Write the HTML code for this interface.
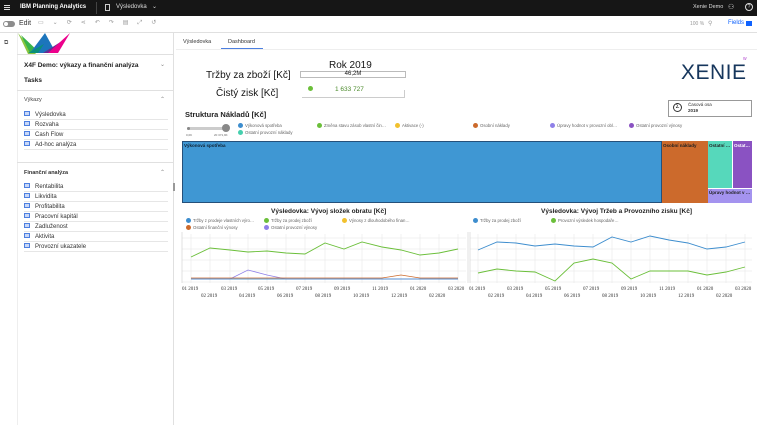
<!DOCTYPE html>
<html><head><meta charset="utf-8"><style>
*{margin:0;padding:0;box-sizing:border-box}
body{width:757px;height:425px;position:relative;overflow:hidden;background:#fff;font-family:"Liberation Sans",sans-serif;color:#161616}
.a{position:absolute;white-space:nowrap}
.lg{font-size:4.3px;color:#666}
.dot{display:inline-block;width:5px;height:5px;border-radius:50%;vertical-align:middle;margin-right:2px}
.it{font-size:6px;color:#333;position:absolute;left:24px;width:144px;height:10px;border-bottom:1px solid #e6e6e6;line-height:10px}
.it i{display:inline-block;width:6px;height:5px;border:1px solid #4c7fe0;background:#c9d8f8;vertical-align:middle;margin-right:5px;margin-top:-1px}
.ax{font-size:5px;color:#333;font-family:"Liberation Serif",serif}
</style></head><body>
<div class="a" style="left:0;top:0;width:757px;height:16px;background:#161616"></div>
<div class="a" style="left:4px;top:5px;width:6px;height:1px;background:#ddd;box-shadow:0 2px 0 #ddd,0 4px 0 #ddd"></div>
<div class="a" style="left:20px;top:4px;font-size:6px;color:#fff;font-weight:bold">IBM Planning Analytics</div>
<div class="a" style="left:96px;top:2px;width:1px;height:12px;background:#444"></div>
<div class="a" style="left:105px;top:4px;width:5px;height:7px;border:1px solid #ccc"></div>
<div class="a" style="left:116px;top:4px;font-size:6px;color:#ddd">Výsledovka</div>
<div class="a" style="left:152px;top:3px;font-size:6px;color:#ddd">⌄</div>
<div class="a" style="left:693px;top:4px;font-size:5.5px;color:#ddd">Xenie Demo</div>
<div class="a" style="left:728px;top:3px;font-size:7px;color:#ddd">⚇</div>
<div class="a" style="left:745px;top:3px;width:8px;height:8px;border:1px solid #ddd;border-radius:50%;font-size:5px;color:#ddd;text-align:center;line-height:6px">?</div>
<div class="a" style="left:0;top:16px;width:757px;height:17px;border-bottom:1px solid #e0e0e0"></div>
<div class="a" style="left:3px;top:21px;width:12px;height:6px;border-radius:3px;background:#8d8d8d"></div>
<div class="a" style="left:4px;top:22px;width:4px;height:4px;border-radius:50%;background:#fff"></div>
<div class="a" style="left:19px;top:20px;font-size:7px;color:#333">Edit</div>
<div class="a" style="left:38px;top:19px;font-size:6px;color:#999;letter-spacing:9px">▭⌄⟳⋖↶↷▤⤢↺</div>
<div class="a" style="left:690px;top:21px;font-size:5px;color:#999">100 %</div>
<div class="a" style="left:708px;top:20px;font-size:6px;color:#999">⚲</div>
<div class="a" style="left:728px;top:20px;font-size:6px;color:#0f62fe">Fields</div>
<div class="a" style="left:746px;top:21px;width:6px;height:5px;background:#0f62fe"></div>
<div class="a" style="left:4px;top:40px;font-size:6px;color:#555">⧉</div>
<div class="a" style="left:17px;top:33px;width:157px;height:392px;border-right:1px solid #e0e0e0;border-left:1px solid #eee"></div>
<svg class="a" style="left:18px;top:33px" width="54" height="21"><polygon points="0,0 18,21 10,21" fill="#8cc63f"/><polygon points="3,2 22,20 12,20" fill="#38b44a"/><polygon points="12,20 27,0 38,20" fill="#1c75bc"/><polygon points="25,20 44,8 35,20" fill="#662d91"/><polygon points="30,20 52,0 40,20" fill="#ec008c"/><polygon points="10,20 26,11 20,20" fill="#0a8f7a"/></svg>
<div class="a" style="left:17px;top:54px;width:156px;height:1px;background:#e0e0e0"></div>
<div class="a" style="left:24px;top:62px;font-size:6.5px;font-weight:bold;color:#222">X4F Demo: výkazy a finanční analýza</div>
<div class="a" style="left:160px;top:61px;font-size:6px;color:#888">⌄</div>
<div class="a" style="left:24px;top:77px;font-size:6.5px;font-weight:bold;color:#222">Tasks</div>
<div class="a" style="left:17px;top:90px;width:156px;height:1px;background:#e0e0e0"></div>
<div class="a" style="left:24px;top:97px;font-size:5.5px;color:#444">Výkazy</div>
<div class="a" style="left:160px;top:96px;font-size:6px;color:#888">⌃</div>
<div class="it" style="top:110px"><i></i>Výsledovka</div>
<div class="it" style="top:120px"><i></i>Rozvaha</div>
<div class="it" style="top:130px"><i></i>Cash Flow</div>
<div class="it" style="top:140px"><i></i>Ad-hoc analýza</div>
<div class="a" style="left:17px;top:162px;width:156px;height:1px;background:#e0e0e0"></div>
<div class="a" style="left:24px;top:170px;font-size:5.5px;font-weight:bold;color:#333">Finanční analýza</div>
<div class="a" style="left:160px;top:169px;font-size:6px;color:#888">⌃</div>
<div class="it" style="top:182px"><i></i>Rentabilita</div>
<div class="it" style="top:192px"><i></i>Likvidita</div>
<div class="it" style="top:202px"><i></i>Profitabilita</div>
<div class="it" style="top:212px"><i></i>Pracovní kapitál</div>
<div class="it" style="top:222px"><i></i>Zadluženost</div>
<div class="it" style="top:232px"><i></i>Aktivita</div>
<div class="it" style="top:242px"><i></i>Provozní ukazatele</div>
<div class="a" style="left:173px;top:183px;width:2px;height:8px;background:#999"></div>
<div class="a" style="left:183px;top:39px;font-size:5.5px;color:#333">Výsledovka</div>
<div class="a" style="left:228px;top:39px;font-size:5.5px;color:#333">Dashboard</div>
<div class="a" style="left:221px;top:48px;width:42px;height:1px;background:#4c7fe0"></div>
<div class="a" style="left:176px;top:49px;width:581px;height:1px;background:#eee"></div>
<div class="a" style="left:329px;top:60px;font-size:10px">Rok 2019</div>
<div class="a" style="left:206px;top:70px;font-size:10px">Tržby za zboží [Kč]</div>
<div class="a" style="left:300px;top:71px;width:106px;height:7px;border:1px solid #bbb;font-size:6px;text-align:center;line-height:5px">46,2M</div>
<div class="a" style="left:216px;top:88px;font-size:10px">Čistý zisk [Kč]</div>
<div class="a" style="left:302px;top:90px;width:103px;height:8px;border-bottom:1px solid #ccc;border-right:1px solid #ccc"></div>
<div class="a" style="left:308px;top:86px;width:5px;height:5px;border-radius:50%;background:#6bbf3a"></div>
<div class="a" style="left:335px;top:86px;font-size:6.5px;color:#4a8a2a">1 633 727</div>
<div class="a" style="left:681px;top:61px;font-size:21px;color:#16365c;letter-spacing:0.5px">XENIE</div>
<div class="a" style="left:743px;top:56px;font-size:5px;color:#b44fd0">ᴡ</div>
<div class="a" style="left:668px;top:100px;width:84px;height:17px;border:1px solid #999"></div>
<div class="a" style="left:673px;top:103px;width:9px;height:9px;border:1px solid #333;border-radius:50%;font-size:6px;text-align:center;line-height:7px">Σ</div>
<div class="a" style="left:688px;top:102px;font-size:4.5px;color:#333">Časová osa</div>
<div class="a" style="left:688px;top:108px;font-size:4.5px;color:#333;font-weight:bold">2019</div>
<div class="a" style="left:185px;top:110px;font-size:7.5px;font-weight:bold;color:#222">Struktura Nákladů [Kč]</div>
<div class="a" style="left:187px;top:127px;width:40px;height:3px;background:#ccc;border-radius:2px"></div>
<div class="a" style="left:187px;top:127px;width:3px;height:3px;border-radius:50%;background:#888"></div>
<div class="a" style="left:222px;top:124px;width:8px;height:8px;border-radius:50%;background:#888"></div>
<div class="a" style="left:186px;top:133px;font-size:3px;color:#666">0,0K</div>
<div class="a" style="left:214px;top:133px;font-size:3px;color:#666">20 371,9K</div>
<div class="a lg" style="left:238px;top:123px"><span class="dot" style="background:#3d8dce"></span>Výkonová spotřeba</div>
<div class="a lg" style="left:238px;top:130px"><span class="dot" style="background:#45cfae"></span>Ostatní provozní náklady</div>
<div class="a lg" style="left:317px;top:123px"><span class="dot" style="background:#6bbf3a"></span>Změna stavu zásob vlastní čin…</div>
<div class="a lg" style="left:395px;top:123px"><span class="dot" style="background:#f2c12e"></span>Aktivace (-)</div>
<div class="a lg" style="left:473px;top:123px"><span class="dot" style="background:#cc6a2c"></span>Osobní náklady</div>
<div class="a lg" style="left:550px;top:123px"><span class="dot" style="background:#8f80e8"></span>Úpravy hodnot v provozní obl…</div>
<div class="a lg" style="left:629px;top:123px"><span class="dot" style="background:#8a52c2"></span>Ostatní provozní výnosy</div>
<div class="a" style="left:182px;top:141px;width:480px;height:62px;background:#3f97d3;border:1px solid #25507a"></div>
<div class="a" style="left:184px;top:143px;font-size:4.5px;font-weight:bold;color:#123">Výkonová spotřeba</div>
<div class="a" style="left:662px;top:141px;width:46px;height:62px;background:#cc6a2c"></div>
<div class="a" style="left:663px;top:143px;font-size:4.5px;font-weight:bold;color:#222">Osobní náklady</div>
<div class="a" style="left:708px;top:141px;width:25px;height:47px;background:#56d8bb;border-right:1px solid #fff"></div>
<div class="a" style="left:709px;top:143px;font-size:4.5px;font-weight:bold;color:#222">Ostatní …</div>
<div class="a" style="left:733px;top:141px;width:19px;height:47px;background:#8a52c2"></div>
<div class="a" style="left:734px;top:143px;font-size:4.5px;font-weight:bold;color:#fff">Ostat…</div>
<div class="a" style="left:708px;top:188px;width:44px;height:15px;background:#a493ef;border-top:1px solid #fff"></div>
<div class="a" style="left:709px;top:190px;font-size:4.5px;font-weight:bold;color:#222">Úpravy hodnot v …</div>
<div class="a" style="left:271px;top:208px;font-size:6.5px;font-weight:bold;color:#222">Výsledovka: Vývoj složek obratu [Kč]</div>
<div class="a" style="left:541px;top:208px;font-size:6.5px;font-weight:bold;color:#222">Výsledovka: Vývoj Tržeb a Provozního zisku [Kč]</div>
<div class="a lg" style="left:186px;top:218px"><span class="dot" style="background:#3d8dce"></span>Tržby z prodeje vlastních výro…</div>
<div class="a lg" style="left:264px;top:218px"><span class="dot" style="background:#6bbf3a"></span>Tržby za prodej zboží</div>
<div class="a lg" style="left:342px;top:218px"><span class="dot" style="background:#f2c12e"></span>Výnosy z dlouhodobého finan…</div>
<div class="a lg" style="left:186px;top:225px"><span class="dot" style="background:#cc6a2c"></span>Ostatní finanční výnosy</div>
<div class="a lg" style="left:264px;top:225px"><span class="dot" style="background:#8f80e8"></span>Ostatní provozní výnosy</div>
<div class="a lg" style="left:473px;top:218px"><span class="dot" style="background:#3d8dce"></span>Tržby za prodej zboží</div>
<div class="a lg" style="left:551px;top:218px"><span class="dot" style="background:#6bbf3a"></span>Provozní výsledek hospodaře…</div>
<svg class="a" style="left:0;top:0" width="757" height="425">
<g stroke="#e6e6e6" stroke-width="0.6" fill="none">
<line x1="182" y1="238" x2="466" y2="238"/><line x1="182" y1="249" x2="466" y2="249"/><line x1="182" y1="260" x2="466" y2="260"/><line x1="182" y1="271" x2="466" y2="271"/><line x1="182" y1="282" x2="466" y2="282"/>
<line x1="470" y1="238" x2="752" y2="238"/><line x1="470" y1="249" x2="752" y2="249"/><line x1="470" y1="260" x2="752" y2="260"/><line x1="470" y1="271" x2="752" y2="271"/><line x1="470" y1="282" x2="752" y2="282"/>
<path d="M191 234V283M210 234V283M230 234V283M248 234V283M267 234V283M286 234V283M305 234V283M325 234V283M344 234V283M362 234V283M382 234V283M401 234V283M420 234V283M439 234V283M458 234V283"/>
<path d="M478 234V283M497 234V283M516 234V283M535 234V283M555 234V283M574 234V283M593 234V283M612 234V283M631 234V283M650 234V283M669 234V283M688 234V283M707 234V283M726 234V283M745 234V283"/>
</g>
<line x1="182" y1="232" x2="182" y2="283" stroke="#ccc" stroke-width="0.6"/>
<line x1="468" y1="232" x2="468" y2="283" stroke="#ccc" stroke-width="0.6"/>
<line x1="470" y1="232" x2="470" y2="283" stroke="#ccc" stroke-width="0.6"/>
<polyline fill="none" stroke="#8a8a8a" stroke-width="0.6" points="191,279 458,279"/>
<polyline fill="none" stroke="#8f80e8" stroke-width="0.8" points="191,279 230,279 248,270 267,275 286,279 458,279"/>
<polyline fill="none" stroke="#cc6a2c" stroke-width="0.8" points="191,278 382,278 401,275 420,278 458,278"/>
<polyline fill="none" stroke="#3d8dce" stroke-width="0.8" points="191,279 458,279"/>
<polyline fill="none" stroke="#6bbf3a" stroke-width="0.9" points="191,257 210,248 230,250 248,252 267,251 286,253 305,254 325,243 344,249 362,242 382,247 401,250 420,255 439,253 458,249"/>
<polyline fill="none" stroke="#3d8dce" stroke-width="0.9" points="478,250 497,242 516,243 535,246 555,244 574,246 593,247 612,237 631,242 650,236 669,240 688,243 707,249 726,247 745,242"/>
<polyline fill="none" stroke="#6bbf3a" stroke-width="0.9" points="478,273 497,269 516,271 535,272 555,281 574,263 593,259 612,263 631,279 650,271 669,271 688,271 707,275 726,272 745,267"/>
</svg>
<div class="a ax" style="left:182px;top:287px">01 2019</div>
<div class="a ax" style="left:221px;top:287px">03 2019</div>
<div class="a ax" style="left:258px;top:287px">05 2019</div>
<div class="a ax" style="left:296px;top:287px">07 2019</div>
<div class="a ax" style="left:334px;top:287px">09 2019</div>
<div class="a ax" style="left:372px;top:287px">11 2019</div>
<div class="a ax" style="left:410px;top:287px">01 2020</div>
<div class="a ax" style="left:448px;top:287px">03 2020</div>
<div class="a ax" style="left:201px;top:294px">02 2019</div>
<div class="a ax" style="left:239px;top:294px">04 2019</div>
<div class="a ax" style="left:277px;top:294px">06 2019</div>
<div class="a ax" style="left:315px;top:294px">08 2019</div>
<div class="a ax" style="left:353px;top:294px">10 2019</div>
<div class="a ax" style="left:391px;top:294px">12 2019</div>
<div class="a ax" style="left:429px;top:294px">02 2020</div>
<div class="a ax" style="left:469px;top:287px">01 2019</div>
<div class="a ax" style="left:507px;top:287px">03 2019</div>
<div class="a ax" style="left:545px;top:287px">05 2019</div>
<div class="a ax" style="left:583px;top:287px">07 2019</div>
<div class="a ax" style="left:621px;top:287px">09 2019</div>
<div class="a ax" style="left:659px;top:287px">11 2019</div>
<div class="a ax" style="left:697px;top:287px">01 2020</div>
<div class="a ax" style="left:735px;top:287px">03 2020</div>
<div class="a ax" style="left:488px;top:294px">02 2019</div>
<div class="a ax" style="left:526px;top:294px">04 2019</div>
<div class="a ax" style="left:564px;top:294px">06 2019</div>
<div class="a ax" style="left:602px;top:294px">08 2019</div>
<div class="a ax" style="left:640px;top:294px">10 2019</div>
<div class="a ax" style="left:678px;top:294px">12 2019</div>
<div class="a ax" style="left:716px;top:294px">02 2020</div>
</body></html>
